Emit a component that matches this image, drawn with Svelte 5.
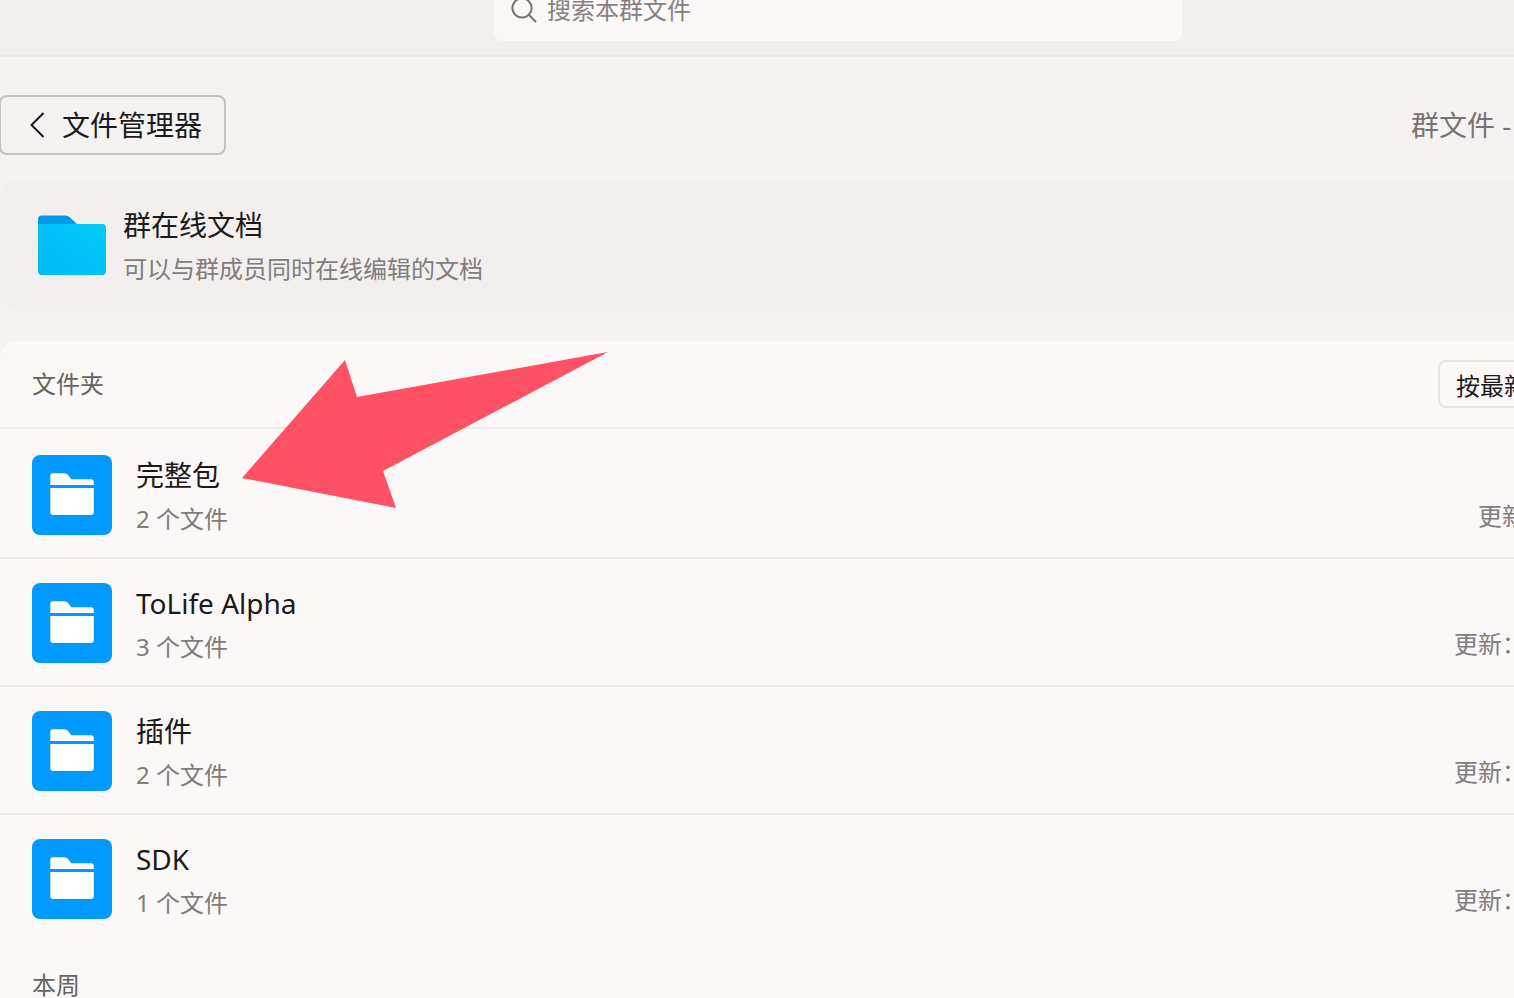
<script lang="ts">
  type Folder = {
    name: string;
    count: number;
    updated: string;
  };

  const folders: Folder[] = [
    { name: '完整包', count: 2, updated: '更新' },
    { name: 'ToLife Alpha', count: 3, updated: '更新：' },
    { name: '插件', count: 2, updated: '更新：' },
    { name: 'SDK', count: 1, updated: '更新：' },
  ];

  let query = $state('');
</script>

<div class="page">
  <header class="topbar">
    <label class="search">
      <svg width="28" height="28" viewBox="0 0 28 28" fill="none">
        <circle cx="12" cy="12" r="9.6" stroke="currentColor" stroke-width="2" />
        <path d="M18.8 18.8L26 26" stroke="currentColor" stroke-width="2" />
      </svg>
      <input type="text" placeholder="搜索本群文件" aria-label="搜索本群文件" bind:value={query} />
    </label>
  </header>

  <main>
    <nav class="toolbar">
      <button class="back">
        <svg width="16" height="28" viewBox="0 0 16 28" fill="none">
          <path d="M14.5 2L2.5 14L14.5 26" stroke="currentColor" stroke-width="2" />
        </svg>
        文件管理器
      </button>
      <span class="location">群文件 -</span>
    </nav>

    <a class="docs" href="#docs">
      <svg width="68" height="62" viewBox="0 0 68 62">
        <defs>
          <linearGradient id="docs-body" x1="0" y1="1" x2="1" y2="0">
            <stop offset="0" stop-color="#00b9f5" />
            <stop offset="1" stop-color="#00cbfa" />
          </linearGradient>
        </defs>
        <path d="M0 12V4Q0 0.5 4 0.5H27Q30 0.5 32 2.5L42 12Z" fill="#0299e8" />
        <path d="M0 9H64Q68 9 68 13V56Q68 60 64 60H4Q0 60 0 56Z" fill="url(#docs-body)" />
      </svg>
      <span class="text">
        <span class="title">群在线文档</span>
        <span class="sub">可以与群成员同时在线编辑的文档</span>
      </span>
    </a>

    <section class="files">
      <div class="files-head">
        <h2>文件夹</h2>
        <button class="sort">按最新</button>
      </div>

      <ul>
        {#each folders as folder}
          <li>
            <svg class="icon" width="80" height="80" viewBox="0 0 80 80">
              <rect width="80" height="80" rx="8" fill="#0099ff" />
              <path
                d="M18.3 30V21Q18.3 18.3 21 18.3H32.5Q34.5 18.3 35.8 19.8L39.5 24.3H59Q61.8 24.3 61.8 27V30Z"
                fill="#fff"
              />
              <path
                d="M18.3 33H61.8V57.3Q61.8 60 59 60H21Q18.3 60 18.3 57.3Z"
                fill="#fff"
              />
            </svg>
            <span class="text">
              <span class="title">{folder.name}</span>
              <span class="sub">{folder.count} 个文件</span>
            </span>
            <span class="updated">{folder.updated}</span>
          </li>
        {/each}
      </ul>

      <h2 class="week">本周</h2>

      <!-- Arrow pointing at the first folder -->
      <svg class="pointer" width="366" height="157" viewBox="0 0 366 157" aria-hidden="true">
        <path d="M0 126L103 8L115 45L366 0L141 119L154 156Z" fill="#ff5165" />
      </svg>
    </section>
  </main>
</div>

<style>
  :global(body) {
    margin: 0;
    background: #f7f2f2;
  }

  .page {
    height: 100vh;
    overflow: hidden;
    display: flex;
    flex-direction: column;
    font-family: 'Noto Sans', 'Noto Sans CJK SC', sans-serif;
    color: #1a1a1a;
  }

  button,
  input {
    font-family: inherit;
  }

  svg {
    flex: none;
    display: block;
  }

  .topbar {
    flex: none;
    display: flex;
    justify-content: center;
    padding: 0 332px 14px 494px;
    background: #f2efee;
    border-bottom: 2px solid #eae7e6;
  }

  .search {
    flex: 1;
    display: flex;
    align-items: center;
    gap: 9px;
    height: 62px;
    margin-top: -21px;
    padding: 0 16px;
    box-sizing: border-box;
    border-radius: 8px;
    background: #fcf8f7;
    color: #777473;
  }

  .search input {
    flex: 1;
    min-width: 0;
    padding: 0;
    border: none;
    outline: none;
    background: transparent;
    color: #1a1a1a;
    font-size: 24px;
    line-height: 36px;
  }

  .search input::placeholder {
    color: #858281;
    opacity: 1;
  }

  main {
    flex: 1;
    min-height: 0;
    display: flex;
    flex-direction: column;
  }

  .toolbar {
    flex: none;
    display: flex;
    align-items: center;
    justify-content: space-between;
    padding: 38px 0 26px;
  }

  .back {
    display: flex;
    align-items: center;
    gap: 17px;
    height: 60px;
    margin-left: -1px;
    padding: 0 22px 0 28px;
    border: 2px solid #c5c1c0;
    border-radius: 8px;
    background: transparent;
    color: #1a1a1a;
    font-size: 28px;
    line-height: 40px;
    cursor: pointer;
  }

  .location {
    width: 103px;
    overflow: hidden;
    white-space: nowrap;
    font-size: 28px;
    line-height: 40px;
    color: #777473;
  }

  .docs {
    flex: none;
    display: flex;
    align-items: center;
    gap: 17px;
    height: 130px;
    padding-left: 38px;
    margin-bottom: 30px;
    border-radius: 16px 0 0 16px;
    background: #f2efee;
    color: inherit;
    text-decoration: none;
  }

  .text {
    flex: 1;
    display: flex;
    flex-direction: column;
    gap: 6px;
  }

  .title {
    font-size: 28px;
    line-height: 40px;
  }

  .sub {
    font-size: 24px;
    line-height: 36px;
    color: #807d7c;
  }

  .files {
    position: relative;
    flex: 1;
    border-radius: 16px 0 0 0;
    background: #fcf8f7;
  }

  .files-head {
    display: flex;
    align-items: center;
    justify-content: space-between;
    height: 86px;
    padding-left: 32px;
    border-bottom: 2px solid #efebea;
  }

  h2 {
    margin: 0;
    font-size: 24px;
    line-height: 36px;
    font-weight: 400;
    color: #666362;
  }

  .sort {
    width: 76px;
    height: 48px;
    padding: 0 0 0 16px;
    overflow: hidden;
    border: 2px solid #e6e3e2;
    border-right: none;
    border-radius: 8px 0 0 8px;
    background: transparent;
    color: #1a1a1a;
    font-size: 24px;
    text-align: left;
    white-space: nowrap;
    cursor: pointer;
  }

  ul {
    margin: 0;
    padding: 2px 0 0;
    list-style: none;
  }

  li {
    display: flex;
    align-items: center;
    gap: 24px;
    height: 128px;
    box-sizing: border-box;
    padding: 2px 0 0 32px;
    border-bottom: 2px solid #efebea;
  }

  li .text {
    padding-top: 2px;
  }

  li:last-child {
    border-bottom-color: transparent;
  }

  .updated {
    max-width: 60px;
    padding-top: 42px;
    overflow: hidden;
    white-space: nowrap;
    font-size: 24px;
    line-height: 36px;
    color: #807d7c;
  }

  li:first-child .updated {
    width: 36px;
  }

  .week {
    padding: 24px 32px 0;
  }

  .pointer {
    position: absolute;
    top: 11px;
    left: 242px;
  }
</style>
